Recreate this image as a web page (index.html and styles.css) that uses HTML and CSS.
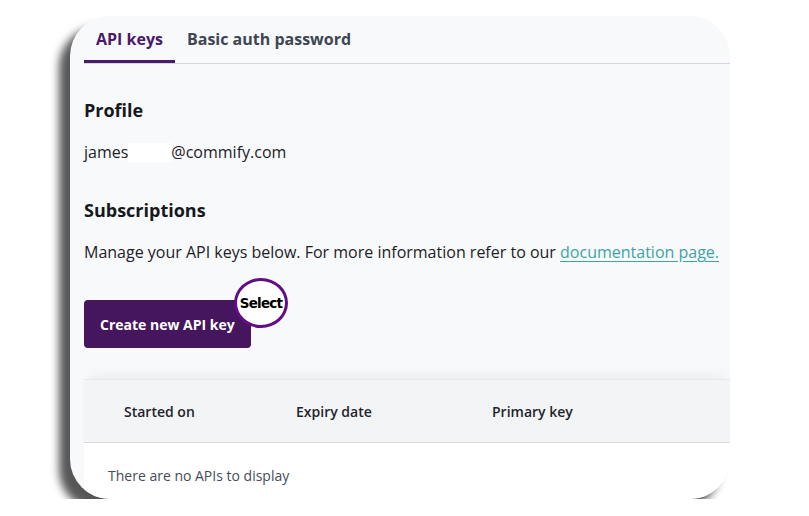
FILE: index.html
```html
<!DOCTYPE html>
<html lang="en">
<head>
<meta charset="utf-8">
<title>API keys</title>
<link rel="stylesheet" href="styles.css">
</head>
<body>
<div class="card">
  <nav class="tabs">
    <div class="tab tab-active">API keys</div>
    <div class="tab">Basic auth password</div>
  </nav>

  <section class="section section-profile">
    <h2 class="heading">Profile</h2>
    <p class="text">james<span class="redact"></span>@commify.com</p>
  </section>

  <section class="section section-subs">
    <h2 class="heading">Subscriptions</h2>
    <p class="text">Manage your API keys below. For more information refer to our <a class="link" href="#">documentation page.</a></p>
  </section>

  <div class="action">
    <button class="btn-primary" type="button">Create new API key</button>
    <span class="select-badge">Select</span>
  </div>

  <div class="table">
    <div class="table-head">
      <div class="th th-start">Started on</div>
      <div class="th th-expiry">Expiry date</div>
      <div class="th th-key">Primary key</div>
    </div>
    <div class="table-body">
      <div class="empty">There are no APIs to display</div>
    </div>
  </div>
</div>
</body>
</html>
```

FILE: styles.css
```css
html, body {
  margin: 0;
  padding: 0;
  background: #ffffff;
}

body {
  padding: 16px 0 0 70px;
  font-family: "Open Sans", "Noto Sans", sans-serif;
  color: #1d2127;
}

.card {
  width: 660px;
  height: 483px;
  box-sizing: border-box;
  padding-left: 14px;
  background: #f8f9fa;
  border-radius: 40px;
  overflow: hidden;
  box-shadow: -11px 11px 9px rgba(0, 0, 0, 0.66);
  display: flex;
  flex-direction: column;
}

.tabs {
  display: flex;
  border-bottom: 1px solid #d6d6da;
}

.tab {
  height: 47px;
  padding: 1px 12px 0;
  box-sizing: border-box;
  display: flex;
  align-items: center;
  font-size: 16px;
  font-weight: 700;
  color: #3e4553;
  border-bottom: 3px solid transparent;
}

.tab-active {
  color: #4a1a6c;
  border-bottom-color: #4a1a6c;
}

.section {
  display: flex;
  flex-direction: column;
  gap: 18px;
}

.section-profile {
  margin-top: 34px;
}

.section-subs {
  margin-top: 34px;
}

.heading {
  margin: 0;
  font-size: 18px;
  line-height: 24px;
  font-weight: 700;
  color: #15181d;
}

.text {
  margin: 0;
  font-size: 16px;
  line-height: 24px;
  color: #1d2127;
}

.redact {
  display: inline-block;
  width: 43px;
  height: 19px;
  background: #ffffff;
  vertical-align: -4px;
}

.link {
  color: #3fa3a5;
  text-decoration: underline;
  text-underline-offset: 3px;
}

.action {
  position: relative;
  margin-top: 36px;
  align-self: flex-start;
}

.btn-primary {
  height: 48px;
  padding: 0 16px;
  border: 0;
  border-radius: 4px;
  background: #45165d;
  color: #ffffff;
  font-family: "Open Sans", "Noto Sans", sans-serif;
  font-size: 14px;
  font-weight: 700;
  display: block;
}

.select-badge {
  position: absolute;
  left: 150px;
  top: -22px;
  width: 48px;
  height: 44px;
  border: 3px solid #620c85;
  border-radius: 50%;
  background: #ffffff;
  display: flex;
  align-items: center;
  justify-content: center;
  font-family: "DejaVu Sans", sans-serif;
  font-size: 13.5px;
  font-weight: 700;
  color: #000000;
  letter-spacing: -0.8px;
}

.table {
  margin-top: 31px;
  flex: 1;
  background: #ffffff;
  box-shadow: 0 -9px 12px -6px rgba(0, 0, 0, 0.06);
}

.table-head {
  height: 64px;
  box-sizing: border-box;
  display: grid;
  grid-template-columns: 172px 196px 1fr;
  align-items: center;
  padding-left: 40px;
  background: #f3f4f6;
  border-top: 1px solid #e7e8ea;
  border-bottom: 1px solid #d9dadd;
}

.th {
  font-size: 14px;
  font-weight: 600;
  color: #1f242b;
  white-space: nowrap;
}

.table-body {
  padding: 23px 24px 0;
}

.empty {
  font-size: 14px;
  line-height: 20px;
  color: #454c57;
}
```
